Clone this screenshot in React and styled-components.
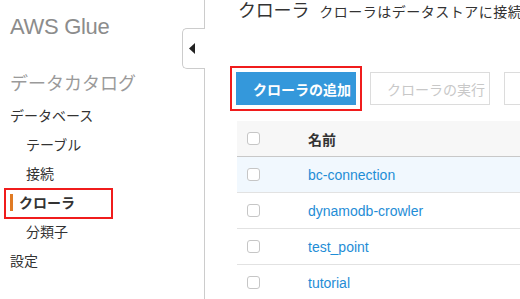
import styled, { createGlobalStyle } from "styled-components";

const GlobalStyle = createGlobalStyle`
  html, body {
    margin: 0;
    padding: 0;
    background: #fff;
    font-family: "Liberation Sans", "Noto Sans CJK JP", sans-serif;
    overflow: hidden;
  }
`;

const Page = styled.div`
  display: flex;
  width: 520px;
  height: 299px;
  overflow: hidden;
`;

// left navigation
const Sidebar = styled.nav`
  position: relative;
  width: 205px;
  flex-shrink: 0;
  border-right: 1px solid #ccc;
  box-sizing: border-box;
  padding: 12px 0 0 0;
`;

const Brand = styled.div`
  font-size: 22px;
  color: #8c8c8c;
  padding-left: 10px;
  line-height: 30px;
  letter-spacing: -0.3px;
`;

const SectionTitle = styled.div`
  font-size: 18px;
  color: #9a9a9a;
  padding-left: 10px;
  margin-top: 30px;
  line-height: 24px;
`;

const NavList = styled.div`
  display: flex;
  flex-direction: column;
  margin-top: 6px;
`;

const NavItem = styled.div`
  position: relative;
  font-size: 14px;
  line-height: 29px;
  color: #333;
  padding-left: ${(p) => (p.$sub ? "26px" : "10px")};

  ${(p) =>
    p.$active &&
    `
    font-weight: bold;
    padding-left: 15px;
    margin-left: 4px;
    width: 109px;
    box-sizing: border-box;
    &::before {
      content: "";
      position: absolute;
      left: 6px;
      top: 5px;
      width: 3px;
      height: 17px;
      background: #e07b24;
    }
    &::after {
      content: "";
      position: absolute;
      inset: -1px 0;
      border: 2px solid #f01c1c;
    }
  `}
`;

const Toggle = styled.div`
  position: absolute;
  right: -1px;
  top: 28px;
  width: 23px;
  height: 41px;
  background: #fff;
  border: 1px solid #ccc;
  border-right: none;
  border-radius: 5px 0 0 5px;
  display: flex;
  align-items: center;
  justify-content: center;
  box-sizing: border-box;
  padding-right: 4px;
`;

// main area
const Main = styled.main`
  flex: 1;
  padding-left: 32px;
  overflow: hidden;
`;

const Header = styled.div`
  display: flex;
  align-items: baseline;
  white-space: nowrap;
  margin-top: -1px;
`;

const Title = styled.h1`
  font-size: 18px;
  font-weight: normal;
  color: #333;
  margin: 0 0 0 1px;
  line-height: 24px;
  letter-spacing: -0.2px;
`;

const Subtitle = styled.span`
  font-size: 14px;
  color: #333;
  margin-left: 10px;
  letter-spacing: 0.5px;
`;

const Toolbar = styled.div`
  display: flex;
  gap: 14px;
  margin-top: 49px;
  white-space: nowrap;
`;

const Highlight = styled.div`
  border: 2px solid #f01c1c;
  padding: 4px;
  margin: -6px -6px 0 -7px;
  display: flex;
`;

const Button = styled.button`
  height: 33px;
  padding: 0 16px;
  font-family: inherit;
  font-size: 14px;
  border-radius: 0;
  flex-shrink: 0;
  background: ${(p) => (p.$primary ? "#3498db" : "#fff")};
  color: ${(p) => (p.$primary ? "#fff" : "#c8c8c8")};
  border: 1px solid ${(p) => (p.$primary ? "#3498db" : "#dcdcdc")};
  font-weight: ${(p) => (p.$primary ? "bold" : "normal")};
  width: ${(p) => p.$w}px;
`;

const Table = styled.div`
  margin-top: 10px;
  width: 400px;
`;

const Row = styled.div`
  display: flex;
  align-items: center;
  height: 36px;
  box-sizing: border-box;
  background: ${(p) => (p.$head ? "#f7f7f7" : p.$hover ? "#f1f8fe" : "#fff")};
  border-bottom: 1px solid ${(p) => (p.$head ? "#c8c8c8" : "#e2e2e2")};
`;

const Check = styled.span`
  width: 11px;
  height: 11px;
  border: 1px solid #c6c6c6;
  border-radius: 3px;
  background: #fff;
  margin-left: 10px;
  flex-shrink: 0;
`;

const Cell = styled.span`
  margin-left: 48px;
  font-size: 14px;
  color: ${(p) => (p.$head ? "#333" : "#1f8dd6")};
  font-weight: ${(p) => (p.$head ? "bold" : "normal")};
`;

const crawlers = ["bc-connection", "dynamodb-crowler", "test_point", "tutorial"];

export default function App() {
  return (
    <>
      <GlobalStyle />
      <Page>
        <Sidebar>
          <Brand>AWS Glue</Brand>
          <SectionTitle>データカタログ</SectionTitle>
          <NavList>
            <NavItem>データベース</NavItem>
            <NavItem $sub>テーブル</NavItem>
            <NavItem $sub>接続</NavItem>
            <NavItem $active>クローラ</NavItem>
            <NavItem $sub>分類子</NavItem>
            <NavItem>設定</NavItem>
          </NavList>
          <Toggle>
            <svg width="6" height="11" viewBox="0 0 6 11">
              <path d="M6 0 L0 5.5 L6 11 Z" fill="#222" />
            </svg>
          </Toggle>
        </Sidebar>
        <Main>
          <Header>
            <Title>クローラ</Title>
            <Subtitle>クローラはデータストアに接続し、データを分類します</Subtitle>
          </Header>
          <Toolbar>
            <Highlight>
              <Button $primary $w={120}>クローラの追加</Button>
            </Highlight>
            <Button $w={120}>クローラの実行</Button>
            <Button $w={120}>アクション</Button>
          </Toolbar>
          <Table>
            <Row $head>
              <Check />
              <Cell $head>名前</Cell>
            </Row>
            {crawlers.map((name, i) => (
              <Row key={name} $hover={i === 0}>
                <Check />
                <Cell>{name}</Cell>
              </Row>
            ))}
          </Table>
        </Main>
      </Page>
    </>
  );
}
